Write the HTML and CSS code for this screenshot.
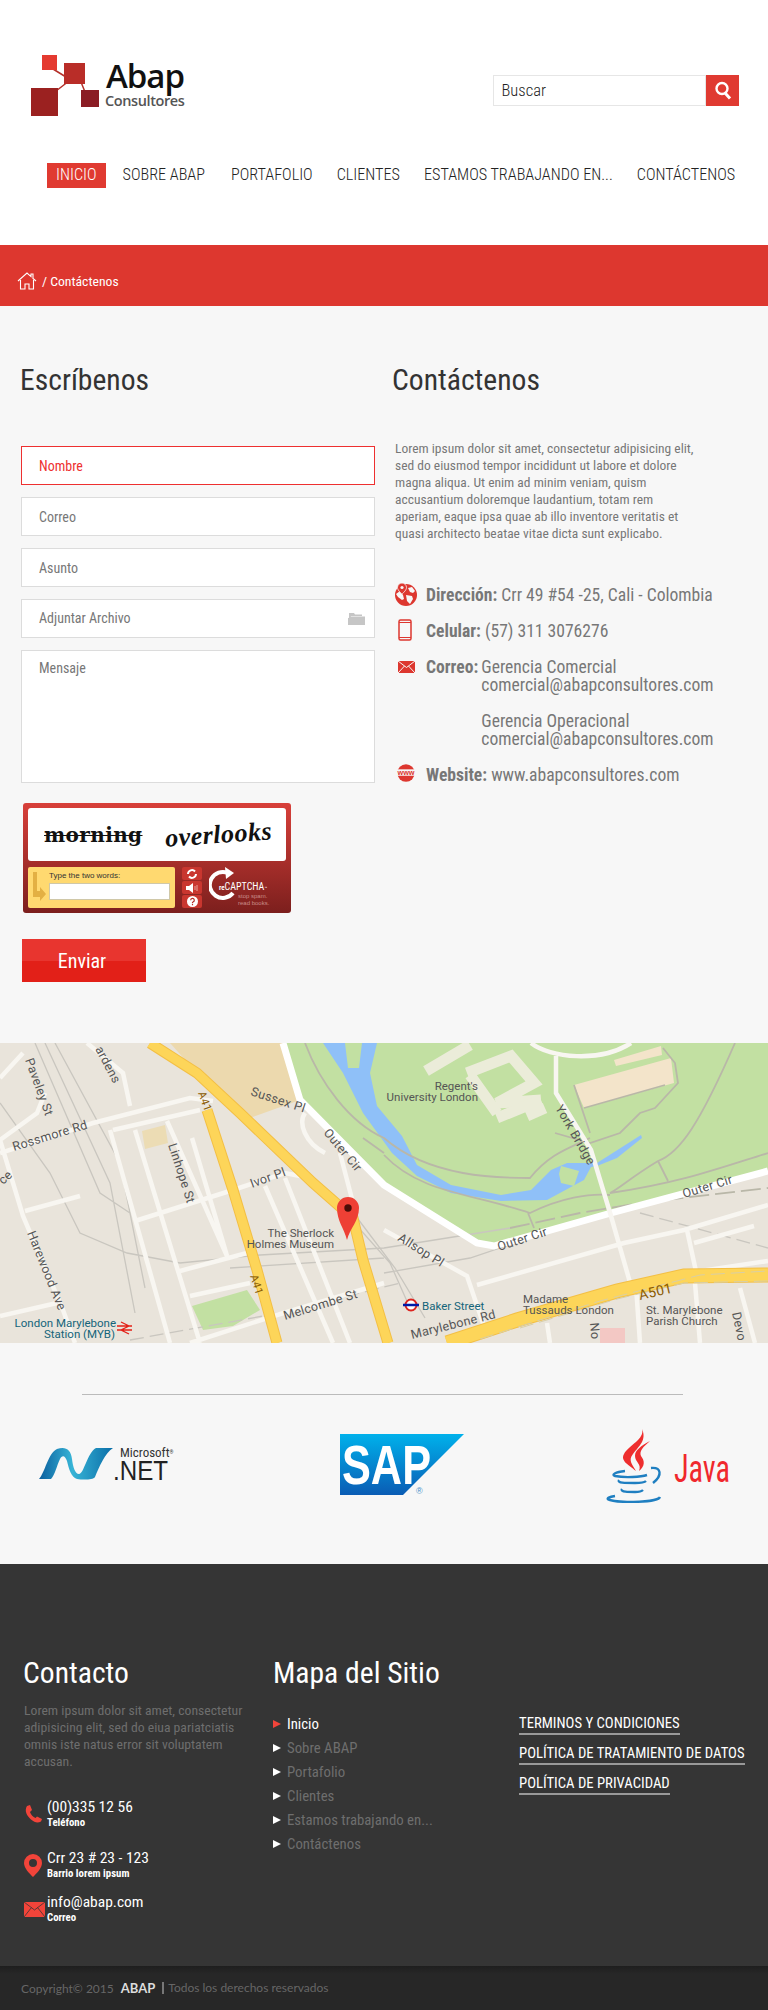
FILE: index.html
```html
<!DOCTYPE html>
<html lang="es">

<head>
    <meta charset="UTF-8">
    <meta name="viewport" content="width=device-width, initial-scale=1.0">
    <title>Contáctenos - Abap Consultores</title>
    <link rel="stylesheet" href="styles.css">
</head>

<body>
    <header class="header">
        <div class="top">
            <svg class="logo" width="160" height="76" viewBox="0 -6 160 76">
                <path d="M22 14l13 8M38 26L25 36M50 27l4 10" stroke="#b53029" stroke-width="1.500" fill="none" />
                <rect x="11" y="0" width="15" height="15" fill="#e43a30" />
                <rect x="33" y="8" width="21" height="21" fill="#b92d28" />
                <rect x="0" y="33" width="27" height="28" fill="#9b2120" />
                <rect x="50" y="35" width="18" height="17" fill="#8a1c24" />
                <text class="logo-name" x="75" y="33">Abap</text>
                <text class="logo-sub" x="74" y="51">Consultores</text>
            </svg>
            <div class="search">
                <div class="search-box">Buscar</div>
                <div class="search-btn">
                    <svg width="18" height="20" viewBox="0 0 18 20">
                        <circle cx="8" cy="7.500" r="5.500" fill="none" stroke="#fff" stroke-width="2.400" />
                        <path d="M11.500 12.500l4.500 5" stroke="#fff" stroke-width="3" />
                    </svg>
                </div>
            </div>
        </div>
        <nav class="nav">
            <a class="active">INICIO</a>
            <a>SOBRE ABAP</a>
            <a>PORTAFOLIO</a>
            <a>CLIENTES</a>
            <a>ESTAMOS TRABAJANDO EN...</a>
            <a>CONTÁCTENOS</a>
        </nav>
    </header>

    <div class="crumb">
        <svg width="20" height="18" viewBox="0 0 20 18">
            <path d="M1 9l9-8 4 3.600V2h2v4.400L19 9M3.500 8v9H8v-5h4v5h4.500V8" fill="none" stroke="#fff" stroke-width="1.100" />
        </svg>
        <span>/ Contáctenos</span>
    </div>

    <main class="contact">
        <section>
            <h2>Escríbenos</h2>
            <form class="form">
                <div class="field focus">Nombre</div>
                <div class="field">Correo</div>
                <div class="field">Asunto</div>
                <div class="field file">
                    Adjuntar Archivo
                    <svg width="17" height="13" viewBox="0 0 17 13">
                        <path d="M1 2.500V1h5l1 1.500h7V4H3L1 7zM0 13V6h0.500L2.500 4.600H17V13z" fill="#c6c6c6" />
                    </svg>
                </div>
                <div class="field message">Mensaje</div>
                <div class="captcha">
                    <div class="captcha-words">
                        <span class="word-a">morning</span>
                        <span class="word-b">overlooks</span>
                    </div>
                    <div class="captcha-row">
                        <div class="captcha-answer">
                            <svg class="captcha-arrow" width="14" height="32" viewBox="0 0 14 32">
                                <path d="M1 0h4v19h3v-4l6 7-6 7v-4H1z" fill="#e3b043" />
                            </svg>
                            <div>
                                <div class="captcha-label">Type the two words:</div>
                                <div class="captcha-input"></div>
                            </div>
                        </div>
                        <div class="captcha-btns">
                            <span>
                                <svg width="12" height="12" viewBox="0 0 12 12"><path d="M2 6a4 4 0 0 1 7-2.500M10 6a4 4 0 0 1-7 2.500" fill="none" stroke="#fff" stroke-width="2" /></svg>
                            </span>
                            <span>
                                <svg width="13" height="10" viewBox="0 0 13 10"><path d="M0 3h3l4-3v10L3 7H0z" fill="#fff" /><path d="M9 3v4M11 2v6" stroke="#e8a29c" /></svg>
                            </span>
                            <span>
                                <svg width="11" height="11" viewBox="0 0 11 11"><circle cx="5.500" cy="5.500" r="5.500" fill="#fff" /><path d="M3.700 4.200a1.800 1.800 0 1 1 2.400 1.700l-.6.6v.8M5.500 8v1.200" fill="none" stroke="#b52d27" stroke-width="1.200" /></svg>
                            </span>
                        </div>
                        <div class="captcha-brand">
                            <svg width="30" height="34" viewBox="0 0 30 34">
                                <path d="M24 26A13 13 0 1 1 19 6" fill="none" stroke="#fff" stroke-width="4" />
                                <path d="M16 0l9 6-8 6z" fill="#fff" />
                            </svg>
                            <div class="captcha-name"><b>re</b>CAPTCHA<small>™</small></div>
                            <div class="captcha-tag">stop spam.<br>read books.</div>
                        </div>
                    </div>
                </div>
                <button class="send" type="button">Enviar</button>
            </form>
        </section>
        <section>
            <h2>Contáctenos</h2>
            <p class="intro">Lorem ipsum dolor sit amet, consectetur adipisicing elit,<br>sed do eiusmod tempor incididunt ut labore et dolore<br>magna aliqua. Ut enim ad minim veniam, quism<br>accusantium doloremque laudantium, totam rem<br>aperiam, eaque ipsa quae ab illo inventore veritatis et<br>quasi architecto beatae vitae dicta sunt explicabo.</p>
            <ul class="info">
                <li>
                    <svg class="info-icon" width="22" height="23" viewBox="0 0 22 23">
                        <circle cx="11" cy="12" r="11" fill="#dd372f" />
                        <path d="M13 5l4-1 3 4-2 2-3-1zM11 12l6 1 1 3-3 5-3-3zM1 11l4-3 3 4 1 4-2 1-4-3z" fill="#f7f7f7" />
                        <path d="M7 0a4.500 4.500 0 0 1 4.500 4.500C11.500 7.500 7 11 7 11S2.500 7.500 2.500 4.500A4.500 4.500 0 0 1 7 0z" fill="#dd372f" stroke="#f7f7f7" stroke-width=".8" />
                        <circle cx="7" cy="4.500" r="1.600" fill="#f7f7f7" />
                    </svg>
                    <div><b>Dirección:</b> Crr 49 #54 -25, Cali - Colombia</div>
                </li>
                <li>
                    <svg class="info-icon" width="22" height="22" viewBox="0 0 22 22">
                        <rect x="4" y="1" width="12" height="20" rx="1.500" fill="none" stroke="#dd372f" stroke-width="1.500" />
                        <path d="M4 3.500h12M4 18.500h12" stroke="#dd372f" />
                    </svg>
                    <div><b>Celular:</b> (57) 311 3076276</div>
                </li>
                <li class="info-mail">
                    <svg class="info-icon" width="22" height="14" viewBox="0 0 22 14">
                        <rect x="3" y="1" width="17" height="12" fill="#dd372f" />
                        <path d="M3 1l8.500 6.500L20 1M3 13l6.500-7M20 13l-6.500-7" fill="none" stroke="#f7f7f7" />
                    </svg>
                    <b>Correo:</b>
                    <div class="mail-list">Gerencia Comercial<br>comercial@abapconsultores.com<br><br>Gerencia Operacional<br>comercial@abapconsultores.com</div>
                </li>
                <li>
                    <svg class="info-icon" width="24" height="20" viewBox="0 0 24 20">
                        <circle cx="12" cy="10" r="9.500" fill="#dd372f" />
                        <rect x="1" y="6" width="22" height="7" fill="#f7f7f7" />
                        <text class="www" x="12" y="12">www</text>
                    </svg>
                    <div><b>Website:</b> www.abapconsultores.com</div>
                </li>
            </ul>
        </section>
    </main>

    <svg class="map" width="768" height="300" viewBox="0 0 768 300">
        <rect width="768" height="300" fill="#e9e4db" />
        <!-- parque -->
        <path d="M283 0L300 57 384 142 484 204 768 128V0z" fill="#c2e0a2" />
        <path d="M170 0H283L300 57 250 75 230 63 197 30z" fill="#ecd9ae" />
        <path d="M142 88L165 82 168 100 145 106z" fill="#ecdcb4" />
        <path d="M192 263L247 247 260 267 233 283 203 287z" fill="#c2e0a2" />
        <path d="M574 42L671 15 674 40 584 65zM614 17L661 3 662 12 616 23z" fill="#f3e4ca" />
        <path d="M600 285H625V300H600z" fill="#f3c8c4" />
        <!-- agua -->
        <path d="M323 0L343 30 363 70 392 110 417 133 451 150 501 158 547 157 584 137 591 124 597 123 617 115 642 95 641 92 597 120 567 120 551 127 531 147 501 152 451 142 417 122 402 93 377 63 370 30 377 0z" fill="#8fc0f8" />
        <path d="M561 123L579 128 574 143 561 140 559 131zM345 0H362L359 25 348 25z" fill="#c2e0a2" />
        <!-- edificios -->
        <g class="campus">
            <path d="M426 28L470 2" />
            <path d="M467 30L511 13 534 40 497 60 541 57" />
            <path d="M497 75L541 57M527 73L545 65M470 32L497 70" />
        </g>
        <!-- senderos -->
        <g class="paths">
            <path d="M305 0C320 40 350 80 384 95 430 135 500 135 530 135 550 110 570 105 590 95M363 95L384 110M384 112C420 150 470 150 530 170 560 155 590 150 610 152M528 170L534 185M555 90L590 100 620 90 640 70 655 65 678 40 675 20 663 5M574 42L590 90M584 65L665 42M735 0C700 80 680 110 658 118 630 135 620 145 610 150 680 140 720 125 768 110M658 118L668 138" />
            <path d="M510 185L580 170 640 160 768 145" stroke-dasharray="20 6" />
        </g>
        <!-- vias -->
        <g class="rail">
            <path d="M35 0L100 150 130 170M45 0L110 140 135 270M55 0L120 120 145 245M0 60L50 130 80 190 127 210 180 220 260 212 384 205 510 185" />
            <path d="M350 175L390 220 410 265M355 172L395 225 425 275M384 230L470 215 560 185M230 225L384 215" />
            <path d="M130 297L280 270 400 240M640 170L768 205" stroke-dasharray="14 6" />
        </g>
        <g class="roads">
            <path d="M283 0L300 57 384 142 477 200 494 203 611 170 768 128" class="wide" />
            <path d="M0 110L93 80 190 55 213 58M113 87L200 67M110 87L170 300M135 87L200 300M167 78L227 213M192 95L227 213M135 178L233 147 285 130 300 133M265 143L333 300M285 135L350 300M180 228L247 210M190 253L250 240M190 300L277 272 384 240M0 35L23 10M0 97L37 70 45 50M0 97L23 173 63 267 75 300M25 168L80 153M0 273L57 260M87 0L123 30 130 63M556 13L556 50 591 107 611 173 631 243M531 0C550 15 600 20 631 0M477 242L624 200 684 187 768 162M694 200L754 183M687 187L697 233M667 233L768 218M384 187L467 233 484 283M636 243L640 300M695 240L700 300M740 245L755 300M547 280L550 300M305 70C298 80 305 100 325 110M340 110L353 160" />
        </g>
        <g class="hw hw-edge">
            <path d="M150 0L197 30 240 70 313 140 353 175 363 217 388 300" />
            <path d="M207 67L233 147 257 227 277 300" />
            <path class="hw-big" d="M447 300L517 277 617 248 684 233 768 232" />
        </g>
        <g class="hw">
            <path d="M150 0L197 30 240 70 313 140 353 175 363 217 388 300" />
            <path d="M207 67L233 147 257 227 277 300" />
            <path class="hw-big" d="M447 300L517 277 617 248 684 233 768 232" />
        </g>
        <path d="M520 285L617 256 684 240 768 238M480 296L600 258 700 232 768 228" class="hw-lane" />
        <!-- etiquetas -->
        <g class="labels">
            <text transform="translate(25 17) rotate(70)">Paveley St</text>
            <text transform="translate(95 6) rotate(62)">ardens</text>
            <text transform="translate(14 108) rotate(-17)">Rossmore Rd</text>
            <text transform="translate(3 142) rotate(-42)">ce</text>
            <text transform="translate(27 190) rotate(68)">Harewood Ave</text>
            <text transform="translate(168 102) rotate(72)">Linhope St</text>
            <text transform="translate(252 145) rotate(-20)">Ivor Pl</text>
            <text transform="translate(250 52) rotate(18)">Sussex Pl</text>
            <text transform="translate(323 90) rotate(50)">Outer Cir</text>
            <text transform="translate(285 277) rotate(-17)">Melcombe St</text>
            <text transform="translate(397 197) rotate(32)">Allsop Pl</text>
            <text transform="translate(412 296) rotate(-14)">Marylebone Rd</text>
            <text transform="translate(499 208) rotate(-18)">Outer Cir</text>
            <text transform="translate(684 155) rotate(-17)">Outer Cir</text>
            <text transform="translate(555 65) rotate(60)">York Bridge</text>
            <text transform="translate(732 270) rotate(78)">Devo</text>
            <text transform="translate(590 280) rotate(85)">No</text>
            <text class="poi end" x="334" y="194">The Sherlock</text>
            <text class="poi end" x="334" y="205">Holmes Museum</text>
            <text class="poi end" x="478" y="47">Regent's</text>
            <text class="poi end" x="478" y="58">University London</text>
            <text class="poi" x="523" y="260">Madame</text>
            <text class="poi" x="523" y="271">Tussauds London</text>
            <text class="poi" x="646" y="271">St. Marylebone</text>
            <text class="poi" x="646" y="282">Parish Church</text>
            <text class="poi transit" x="422" y="267">Baker Street</text>
            <text class="poi transit end" x="116" y="284">London Marylebone</text>
            <text class="poi transit end" x="115" y="295">Station (MYB)</text>
            <text class="hw-label" transform="translate(198 50) rotate(70)">A41</text>
            <text class="hw-label" transform="translate(250 233) rotate(72)">A41</text>
            <text class="hw-label big" transform="translate(640 257) rotate(-13)">A501</text>
        </g>
        <circle cx="411" cy="262" r="5.500" fill="#fff" stroke="#dc241f" stroke-width="2" />
        <path d="M403 262H419" stroke="#0019a8" stroke-width="2.500" />
        <path d="M117 283h15M117 287h15M121 279l8 4-8 4 8 4" fill="none" stroke="#e32017" stroke-width="1.300" />
        <path d="M347 197C344 185 337 178 337 165A11 11 0 0 1 359 165C359 178 350 185 347 197z" fill="#ee4035" />
        <circle cx="348" cy="165" r="3.700" fill="#4a0d08" />
    </svg>

    <section class="clients">
        <div class="clients-rule"></div>
        <div class="clients-logos">
            <svg class="net" width="136" height="44" viewBox="0 -4 136 44">
                <defs>
                    <linearGradient id="netGrad" x1="0" x2="1" y1="0" y2="0">
                        <stop offset="0" stop-color="#0a5f9e" />
                        <stop offset=".45" stop-color="#37b4d6" />
                        <stop offset="1" stop-color="#0b6ea8" />
                    </linearGradient>
                </defs>
                <path d="M0 32C6 26 9 6 18 2 26-1 32 2 33 12 34 20 36 27 40 27 45 27 48 6 57 1L74 1C66 6 60 20 56 30 54 33 44 33 38 32 32 30 30 22 28 14 26 8 23 8 21 12 18 18 16 28 12 32z" fill="url(#netGrad)" />
                <text class="net-ms" x="81" y="10">Microsoft<tspan class="net-reg" dy="-3">®</tspan></text>
                <text class="net-name" x="74" y="33" textLength="55" lengthAdjust="spacingAndGlyphs">.NET</text>
            </svg>
            <svg class="sap" width="125" height="68" viewBox="0 -3 125 68">
                <defs>
                    <linearGradient id="sapGrad" x1="0" x2="0" y1="0" y2="1">
                        <stop offset="0" stop-color="#00b1eb" />
                        <stop offset="1" stop-color="#0a5cb4" />
                    </linearGradient>
                </defs>
                <path d="M0 0H124L63 61H0z" fill="url(#sapGrad)" />
                <text class="sap-name" x="2" y="50" textLength="89" lengthAdjust="spacingAndGlyphs">SAP</text>
                <text class="sap-reg" x="76" y="60">®</text>
            </svg>
            <svg class="java" width="126" height="76" viewBox="0 0 126 76">
                <path d="M37 2C40 12 24 18 19 27 15 34 24 38 31 44 27 37 23 33 28 27 34 19 42 13 37 2zM45 14C36 19 30 23 30 29 30 35 37 37 34 44 40 39 40 34 36 29 34 24 38 20 45 14z" fill="#ee2e2e" />
                <g class="java-cup">
                    <path d="M20 44C10 45 6 48 10 49 20 51 36 50 42 48" />
                    <path d="M46 41C56 40 58 48 48 56" />
                    <path d="M14 53C12 56 20 56 30 56 36 56 40 55 41 54" />
                    <path d="M17 62C15 65 24 65 30 65 34 65 37 64 38 63" />
                    <path d="M10 69C-2 71 0 74 22 75 40 75 54 73 55 70" />
                </g>
                <text class="java-name" x="69" y="55" textLength="56" lengthAdjust="spacingAndGlyphs">Java</text>
            </svg>
        </div>
    </section>

    <footer class="footer">
        <div class="footer-main">
            <div>
                <h3>Contacto</h3>
                <p class="footer-text">Lorem ipsum dolor sit amet, consectetur adipisicing elit, sed do eiua pariatciatis omnis iste natus error sit voluptatem accusan.</p>
                <div class="footer-item phone">
                    <svg width="18" height="18" viewBox="0 0 18 18">
                        <path d="M3 1L6 0 8 5 6 7C7 10 9 12 11.500 13L13 11.500 18 14 17 16.500C14 18 11 18 7 14.500 3 11 0 6 3 1z" fill="#f2443a" />
                    </svg>
                    <div><div class="footer-big">(00)335 12 56</div><div class="footer-small">Teléfono</div></div>
                </div>
                <div class="footer-item addr">
                    <svg width="18" height="23" viewBox="0 0 18 23">
                        <path fill-rule="evenodd" d="M9 0a9 9 0 0 1 9 9c0 5-5 10-9 14C5 19 0 14 0 9a9 9 0 0 1 9-9zm0 5a4 4 0 1 0 0 8 4 4 0 0 0 0-8z" fill="#f2443a" />
                    </svg>
                    <div><div class="footer-big">Crr 23 # 23 - 123</div><div class="footer-small">Barrio lorem ipsum</div></div>
                </div>
                <div class="footer-item">
                    <svg width="21" height="15" viewBox="0 0 21 15">
                        <rect width="21" height="15" fill="#f2443a" />
                        <path d="M0 0l10.500 8L21 0M0 15l7.500-9.500M21 15l-7.500-9.500" fill="none" stroke="#353535" stroke-width=".8" />
                    </svg>
                    <div><div class="footer-big">info@abap.com</div><div class="footer-small">Correo</div></div>
                </div>
            </div>
            <div>
                <h3>Mapa del Sitio</h3>
                <ul class="sitemap">
                    <li class="active">Inicio</li>
                    <li>Sobre ABAP</li>
                    <li>Portafolio</li>
                    <li>Clientes</li>
                    <li>Estamos trabajando en...</li>
                    <li>Contáctenos</li>
                </ul>
            </div>
            <div class="legal">
                <a>TERMINOS Y CONDICIONES</a>
                <a>POLÍTICA DE TRATAMIENTO DE DATOS</a>
                <a>POLÍTICA DE PRIVACIDAD</a>
            </div>
        </div>
        <div class="footer-bar">
            <span>Copyright© 2015</span>
            <b>ABAP</b>
            <span class="footer-sep">Todos los derechos reservados</span>
        </div>
    </footer>
</body>

</html>
```

FILE: styles.css
```css
html,
body {
    margin: 0;
    background: #fff;
}

body {
    font-family: Roboto, sans-serif;
    font-stretch: 75%;
    color: #333;
    width: 768px;
}

h2,
h3,
p,
ul {
    margin: 0;
    padding: 0;
    font-weight: 400;
}

ul {
    list-style: none;
}

/* cabecera */
.header {
    height: 245px;
    box-sizing: border-box;
    padding: 55px 29px 0 31px;
}

.top {
    display: flex;
    justify-content: space-between;
    height: 108px;
}

.logo {
    margin-top: -6px;
}

.logo-name {
    font-family: "Open Sans", sans-serif;
    font-stretch: normal;
    font-size: 33px;
    font-weight: 600;
    fill: #111;
    letter-spacing: -1px;
}

.logo-sub {
    font-family: "Open Sans", sans-serif;
    font-stretch: normal;
    font-size: 14.500px;
    font-weight: 600;
    fill: #555;
    letter-spacing: -.4px;
}

.search {
    display: flex;
    margin-top: 20px;
    height: 31px;
}

.search-box {
    width: 213.500px;
    box-sizing: border-box;
    border: 1px solid #e6e6e6;
    padding-left: 8px;
    font-size: 16.500px;
    font-weight: 300;
    line-height: 30px;
    color: #222;
    background: #fff;
}

.search-btn {
    width: 33px;
    background: #e03a31;
    display: flex;
    align-items: center;
    justify-content: center;
}

.nav {
    display: flex;
    align-items: center;
    padding-left: 16px;
    font-size: 16.200px;
    font-weight: 300;
    color: #222;
}

.nav a {
    padding: 0 9px;
    height: 25px;
    line-height: 24px;
    margin-right: 8px;
    white-space: nowrap;
}

.nav a:nth-child(n+3) {
    margin-right: 6px;
}

.nav a.active {
    background: #e03a31;
    color: #fff;
}

/* miga */
.crumb {
    height: 61px;
    background: #dd372f;
    color: #fff;
    display: flex;
    align-items: center;
    gap: 5px;
    padding-left: 17px;
    padding-top: 10px;
    box-sizing: border-box;
    font-size: 13.700px;
    font-weight: 450;
}

/* contacto */
.contact {
    height: 737px;
    box-sizing: border-box;
    background: #f7f7f7;
    padding: 56px 0 0 20px;
    display: grid;
    grid-template-columns: 372px 1fr;
}

.contact h2 {
    font-size: 29.600px;
    line-height: 36px;
    color: #333;
}

.form {
    margin: 48px 0 0 1px;
    width: 354px;
}

.field {
    height: 39px;
    box-sizing: border-box;
    border: 1px solid #dcdcdc;
    background: #fff;
    padding-left: 17px;
    font-size: 14px;
    line-height: 39px;
    color: #777;
    margin-bottom: 12px;
}

.field.focus {
    border-color: #ee3030;
    color: #ee3030;
}

.field.file {
    display: flex;
    justify-content: space-between;
    align-items: center;
    padding-right: 9px;
}

.field.message {
    height: 133px;
    line-height: 34px;
    margin-bottom: 20px;
}

.captcha {
    width: 268px;
    height: 110px;
    margin-left: 2px;
    box-sizing: border-box;
    padding: 5px;
    border-radius: 3px;
    background: linear-gradient(#d8403a, #7c1f1d);
}

.captcha-words {
    height: 53px;
    background: #fff;
    border-radius: 3px;
    display: flex;
    align-items: center;
    padding-left: 16px;
    gap: 22px;
    color: #111;
    font-weight: 700;
}

.word-a {
    font-family: "DejaVu Serif", serif;
    font-stretch: normal;
    font-size: 20px;
    letter-spacing: .4px;
    text-decoration: line-through;
    text-decoration-thickness: 1px;
}

.word-b {
    font-family: "Liberation Serif", serif;
    font-stretch: normal;
    font-size: 26px;
    font-style: italic;
    letter-spacing: .5px;
    transform: rotate(-4deg);
}

.captcha-row {
    display: flex;
    margin-top: 6px;
    gap: 7px;
}

.captcha-answer {
    width: 147px;
    height: 41px;
    box-sizing: border-box;
    background: #ffd970;
    border-radius: 2px;
    display: flex;
    padding: 3px 4px 0 4px;
    gap: 3px;
}

.captcha-arrow {
    margin-top: 2px;
    flex: none;
}

.captcha-label {
    font-family: "Liberation Sans", sans-serif;
    font-stretch: normal;
    font-size: 8px;
    color: #333;
    margin: 1px 0 3px;
}

.captcha-input {
    width: 121px;
    height: 17px;
    box-sizing: border-box;
    background: #fff;
    border: 1px solid #d0c8a8;
}

.captcha-btns {
    display: flex;
    flex-direction: column;
    gap: 1px;
}

.captcha-btns span {
    width: 20px;
    height: 13px;
    background: #c9362f;
    display: flex;
    align-items: center;
    justify-content: center;
    border-radius: 2px;
}

.captcha-brand {
    position: relative;
    flex: 1;
    color: #fff;
}

.captcha-name {
    position: absolute;
    left: 10px;
    top: 14px;
    font-size: 10px;
}

.captcha-name b {
    font-size: 7px;
}

.captcha-name small {
    font-size: 5px;
}

.captcha-tag {
    position: absolute;
    left: 29px;
    top: 26px;
    font-family: "Liberation Sans", sans-serif;
    font-stretch: normal;
    font-size: 6px;
    line-height: 7px;
    color: #c98d8a;
}

.send {
    display: block;
    width: 124px;
    height: 43px;
    margin: 26px 0 0 1px;
    border: 0;
    padding: 0 4px 0 0;
    background: linear-gradient(#e8352f 50%, #e22018 50%);
    color: #fff;
    font-family: Roboto, sans-serif;
    font-stretch: 75%;
    font-size: 20px;
    font-weight: 400;
}

.intro {
    margin-top: 42px;
    padding-left: 3px;
    font-size: 13.500px;
    line-height: 17px;
    color: #777;
}

.info {
    margin-top: 44px;
    padding-left: 3px;
    font-size: 17.600px;
    line-height: 18px;
    color: #777;
}

.info li {
    display: flex;
    align-items: flex-start;
    margin-bottom: 18px;
}

.info li b {
    font-weight: 700;
    white-space: pre;
}

.info-icon {
    width: 22px;
    margin-right: 9px;
    margin-top: -3px;
    margin-bottom: -6px;
    flex: none;
}

.info-mail .info-icon {
    margin-top: 2px;
    margin-bottom: 0;
}

.info-mail b {
    margin-right: 3px;
}

.www {
    font-family: "Liberation Sans", sans-serif;
    font-stretch: normal;
    font-size: 8px;
    font-weight: 700;
    fill: #dd372f;
    text-anchor: middle;
}

/* mapa */
.map {
    display: block;
}

.campus path {
    fill: none;
    stroke: #ebecd9;
    stroke-width: 11;
}

.paths path {
    fill: none;
    stroke: #b9b7a8;
    stroke-width: 1.800;
}

.rail path {
    fill: none;
    stroke: #c9c6bf;
    stroke-width: 1.300;
}

.roads path {
    fill: none;
    stroke: #f8f6f1;
    stroke-width: 4.500;
}

.roads .wide {
    stroke: #fff;
    stroke-width: 7;
}

.hw path {
    fill: none;
    stroke: #fdd559;
    stroke-width: 9;
}

.hw .hw-big {
    stroke-width: 13;
}

.hw-edge path {
    stroke: #f3bf45;
    stroke-width: 11;
}

.hw-edge .hw-big {
    stroke-width: 15;
}

.hw-lane {
    fill: none;
    stroke: #d9cfa6;
    stroke-width: 1;
    stroke-dasharray: 14 6;
}

.labels text {
    font-family: Roboto, sans-serif;
    font-stretch: normal;
    font-size: 12.500px;
    letter-spacing: .3px;
    fill: #555;
}

.labels .poi {
    font-size: 11.500px;
    letter-spacing: 0;
}

.labels .end {
    text-anchor: end;
}

.labels .transit {
    fill: #14647a;
}

.labels .hw-label {
    font-size: 11px;
    fill: #8a5a00;
}

.labels .big {
    font-size: 14px;
}

/* clientes */
.clients {
    height: 221px;
    box-sizing: border-box;
    background: #f7f7f7;
    padding-top: 51px;
}

.clients-rule {
    width: 601px;
    height: 1px;
    margin-left: 82px;
    background: #bbb;
}

.clients-logos {
    height: 110px;
    display: grid;
    grid-template-columns: 301px 265px 1fr;
    align-items: center;
    padding-left: 39px;
    margin-top: 15px;
}

.net-ms {
    font-size: 13px;
    fill: #333;
}

.net-reg {
    font-size: 5px;
}

.net-name {
    font-family: "Liberation Sans", sans-serif;
    font-stretch: normal;
    font-size: 28px;
    fill: #222;
}

.sap-name {
    font-family: "Liberation Sans", sans-serif;
    font-stretch: normal;
    font-size: 55px;
    font-weight: 700;
    fill: #fff;
}

.sap-reg {
    font-family: "Liberation Sans", sans-serif;
    font-stretch: normal;
    font-size: 9px;
    fill: #4a90c8;
}

.java-cup path {
    fill: none;
    stroke: #1f7fc1;
    stroke-width: 2.400;
}

.java-name {
    font-size: 38px;
    font-weight: 400;
    fill: #f0282d;
}

/* pie */
.footer-main {
    height: 402px;
    box-sizing: border-box;
    background: #353535;
    padding: 91px 0 0 23px;
    display: grid;
    grid-template-columns: 250px 246px 1fr;
    color: #fff;
}

.footer-main h3 {
    font-size: 29.600px;
    line-height: 36px;
}

.footer-text {
    width: 226px;
    margin: 11px 0 0 1px;
    font-size: 13.700px;
    line-height: 17px;
    color: #6e6e6e;
}

.footer-item {
    display: grid;
    grid-template-columns: 23px 1fr;
    align-items: center;
    height: 30px;
    margin: 14px 0 0 1px;
}

.footer-item.phone {
    margin-top: 29px;
}

.footer-item.addr {
    margin-top: 21px;
}

.footer-big {
    font-size: 15.500px;
    line-height: 17px;
}

.footer-small {
    font-size: 10.800px;
    font-weight: 700;
    line-height: 13px;
}

.sitemap {
    margin-top: 21px;
    font-size: 14.800px;
    color: #6e6e6e;
}

.sitemap li {
    height: 24px;
    line-height: 24px;
    padding-left: 14px;
    position: relative;
}

.sitemap li::before {
    content: "";
    position: absolute;
    left: 0;
    top: 8px;
    border-left: 8px solid #fff;
    border-top: 4px solid transparent;
    border-bottom: 4px solid transparent;
}

.sitemap li.active {
    color: #fff;
}

.sitemap li.active::before {
    border-left-color: #f2443a;
}

.legal {
    display: flex;
    flex-direction: column;
    align-items: flex-start;
    gap: 9px;
    padding-top: 59px;
    font-size: 14.700px;
    line-height: 19px;
}

.legal a {
    color: #fff;
    border-bottom: 2px solid #999;
}

.footer-bar {
    height: 44px;
    box-sizing: border-box;
    background: linear-gradient(#1e1e1e, #272727 8px);
    display: flex;
    align-items: center;
    padding-left: 21px;
    font-family: Lato, sans-serif;
    font-stretch: normal;
    font-size: 12px;
    color: #666;
}

.footer-bar b {
    margin-left: 7px;
    font-size: 13px;
    color: #ddd;
}

.footer-sep {
    margin-left: 7px;
    padding-left: 4px;
    border-left: 2px solid #777;
    line-height: 12px;
}
```
